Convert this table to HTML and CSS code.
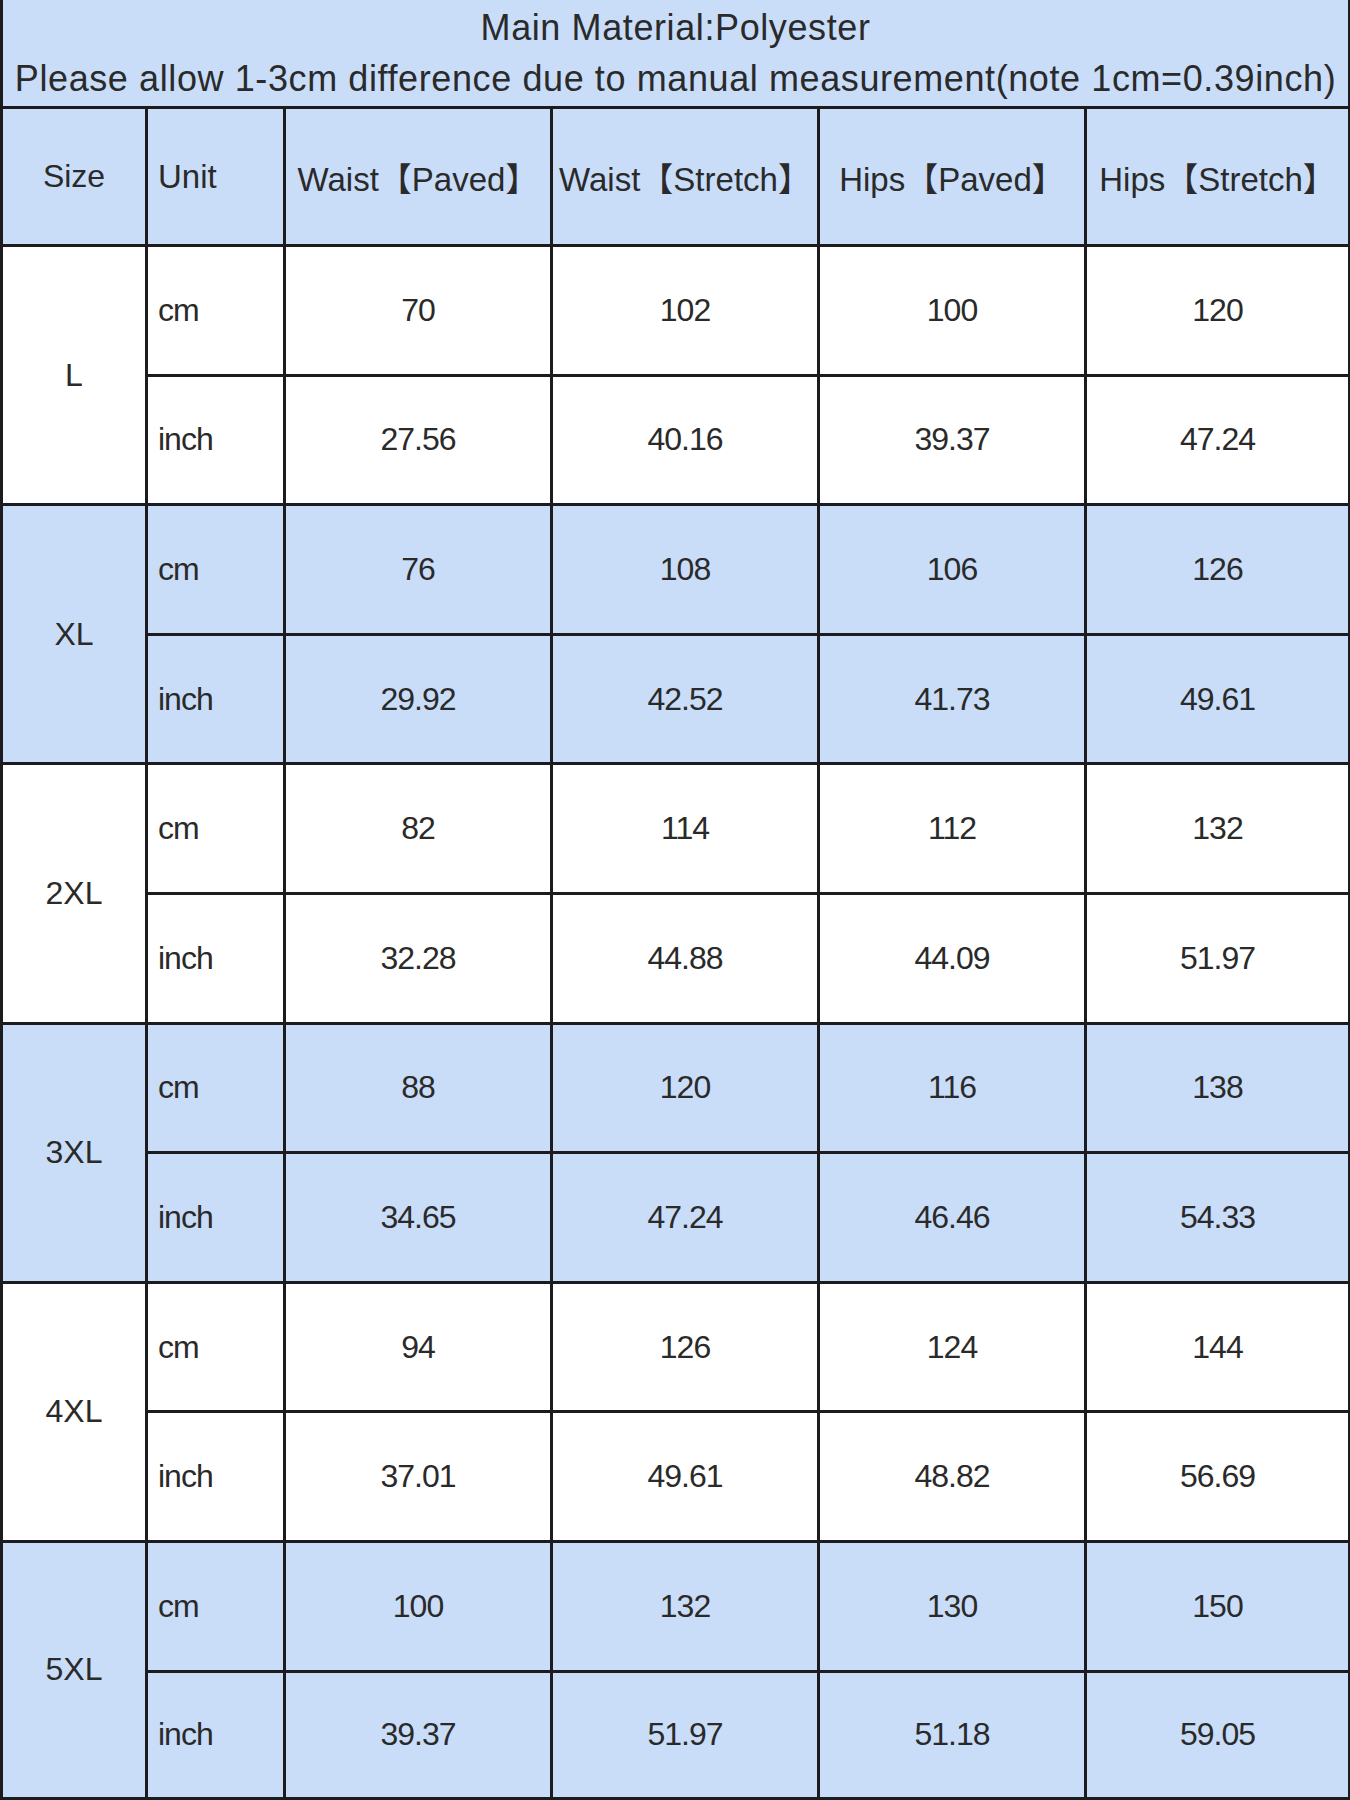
FILE: index.html
```html
<!DOCTYPE html>
<html lang="en">
<head>
<meta charset="utf-8">
<title>Size Chart</title>
<link rel="stylesheet" href="styles.css">
</head>
<body>
<table class="chart">
  <colgroup>
    <col class="c-size">
    <col class="c-unit">
    <col class="c-val">
    <col class="c-val">
    <col class="c-val">
    <col class="c-val2">
  </colgroup>
  <tr class="row-title">
    <td class="title" colspan="6">
      <div class="title-line">Main Material:Polyester</div>
      <div class="title-line">Please allow 1-3cm difference due to manual measurement(note 1cm=0.39inch)</div>
    </td>
  </tr>
  <tr class="row-head">
    <td class="head size">Size</td>
    <td class="head unit">Unit</td>
    <td class="head">Waist【Paved】</td>
    <td class="head">Waist【Stretch】</td>
    <td class="head">Hips【Paved】</td>
    <td class="head">Hips【Stretch】</td>
  </tr>

  <tr class="row white">
    <td class="size" rowspan="2">L</td>
    <td class="unit">cm</td><td>70</td><td>102</td><td>100</td><td>120</td>
  </tr>
  <tr class="row white">
    <td class="unit">inch</td><td>27.56</td><td>40.16</td><td>39.37</td><td>47.24</td>
  </tr>

  <tr class="row blue">
    <td class="size" rowspan="2">XL</td>
    <td class="unit">cm</td><td>76</td><td>108</td><td>106</td><td>126</td>
  </tr>
  <tr class="row blue">
    <td class="unit">inch</td><td>29.92</td><td>42.52</td><td>41.73</td><td>49.61</td>
  </tr>

  <tr class="row white">
    <td class="size" rowspan="2">2XL</td>
    <td class="unit">cm</td><td>82</td><td>114</td><td>112</td><td>132</td>
  </tr>
  <tr class="row white">
    <td class="unit">inch</td><td>32.28</td><td>44.88</td><td>44.09</td><td>51.97</td>
  </tr>

  <tr class="row blue">
    <td class="size" rowspan="2">3XL</td>
    <td class="unit">cm</td><td>88</td><td>120</td><td>116</td><td>138</td>
  </tr>
  <tr class="row blue">
    <td class="unit">inch</td><td>34.65</td><td>47.24</td><td>46.46</td><td>54.33</td>
  </tr>

  <tr class="row white">
    <td class="size" rowspan="2">4XL</td>
    <td class="unit">cm</td><td>94</td><td>126</td><td>124</td><td>144</td>
  </tr>
  <tr class="row white">
    <td class="unit">inch</td><td>37.01</td><td>49.61</td><td>48.82</td><td>56.69</td>
  </tr>

  <tr class="row blue">
    <td class="size" rowspan="2">5XL</td>
    <td class="unit">cm</td><td>100</td><td>132</td><td>130</td><td>150</td>
  </tr>
  <tr class="row blue last">
    <td class="unit">inch</td><td>39.37</td><td>51.97</td><td>51.18</td><td>59.05</td>
  </tr>
</table>
</body>
</html>
```

FILE: styles.css
```css
html, body {
  margin: 0;
  padding: 0;
  background: #ffffff;
}

.chart {
  width: 1348px;
  border-collapse: collapse;
  table-layout: fixed;
  font-family: "Liberation Sans", Arial, "Noto Sans CJK SC", sans-serif;
  color: #2a2a2a;
}

.c-size { width: 145px; }
.c-unit { width: 138px; }
.c-val { width: 267px; }
.c-val2 { width: 264px; }

.chart td {
  border: 3px solid #1c1c1f;
  padding: 0;
  text-align: center;
  vertical-align: middle;
  font-size: 32px;
  letter-spacing: -1px;
  white-space: nowrap;
}

.row-title td.title {
  border-top: none;
  background: #c9ddf9;
  height: 106px;
  font-size: 36px;
  letter-spacing: 0.6px;
}

.title-line {
  line-height: 51px;
}

.row-head td {
  background: #c9ddf9;
  height: 135px;
  font-size: 33px;
  letter-spacing: 0;
}

.row td {
  height: 126.6px;
}

.row.last td {
  height: 124px;
}

.row.blue td {
  background: #c9ddf9;
}

.row.white td {
  background: #ffffff;
}

.chart td.size {
  letter-spacing: 0;
  font-size: 32px;
}

.chart td.unit {
  text-align: left;
  padding-left: 10px;
}
```
